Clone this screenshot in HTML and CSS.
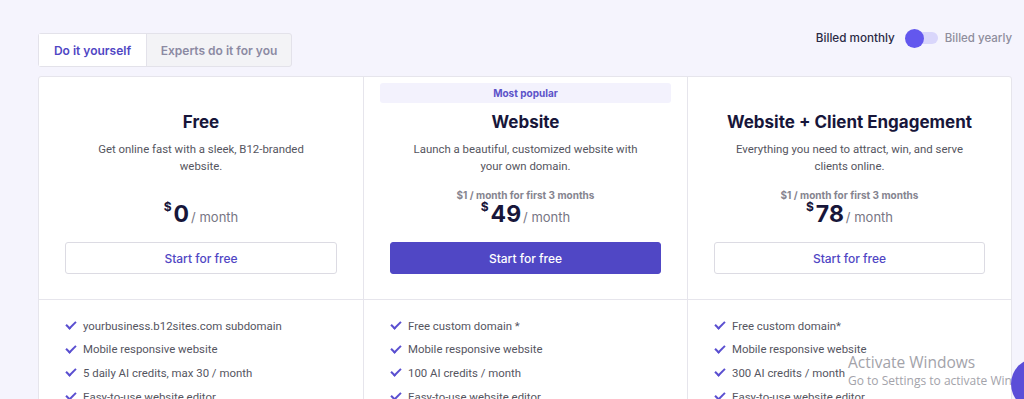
FILE: index.html
```html
<!DOCTYPE html>
<html lang="en">
<head>
    <meta charset="UTF-8">
    <meta name="viewport" content="width=device-width, initial-scale=1.0">
    <title>Pricing</title>
    <link rel="stylesheet" href="styles.css">
</head>
<body>
    <div class="page">
        <div class="topbar">
            <div class="tabs">
                <div class="tab active">Do it yourself</div>
                <div class="tab">Experts do it for you</div>
            </div>
            <div class="billing">
                <span class="bill-on">Billed monthly</span>
                <span class="switch"><span class="knob"></span></span>
                <span class="bill-off">Billed yearly</span>
            </div>
        </div>

        <div class="plans">
            <div class="plan">
                <div class="plan-head">
                    <div class="badge hidden">Most popular</div>
                    <h2>Free</h2>
                    <p class="desc">Get online fast with a sleek, B12-branded website.</p>
                    <p class="intro hidden">$1 / month for first 3 months</p>
                    <div class="price"><sup>$</sup><b>0</b><span>/ month</span></div>
                    <button class="btn">Start for free</button>
                </div>
                <ul class="features">
                    <li>yourbusiness.b12sites.com subdomain</li>
                    <li>Mobile responsive website</li>
                    <li>5 daily AI credits, max 30 / month</li>
                    <li>Easy-to-use website editor</li>
                </ul>
            </div>

            <div class="plan">
                <div class="plan-head">
                    <div class="badge">Most popular</div>
                    <h2>Website</h2>
                    <p class="desc">Launch a beautiful, customized website with your own domain.</p>
                    <p class="intro">$1 / month for first 3 months</p>
                    <div class="price"><sup>$</sup><b>49</b><span>/ month</span></div>
                    <button class="btn primary">Start for free</button>
                </div>
                <ul class="features">
                    <li>Free custom domain *</li>
                    <li>Mobile responsive website</li>
                    <li>100 AI credits / month</li>
                    <li>Easy-to-use website editor</li>
                </ul>
            </div>

            <div class="plan">
                <div class="plan-head">
                    <div class="badge hidden">Most popular</div>
                    <h2>Website + Client Engagement</h2>
                    <p class="desc">Everything you need to attract, win, and serve clients online.</p>
                    <p class="intro">$1 / month for first 3 months</p>
                    <div class="price"><sup>$</sup><b>78</b><span>/ month</span></div>
                    <button class="btn">Start for free</button>
                </div>
                <ul class="features">
                    <li>Free custom domain*</li>
                    <li>Mobile responsive website</li>
                    <li>300 AI credits / month</li>
                    <li>Easy-to-use website editor</li>
                </ul>
            </div>
        </div>
    </div>

    <div class="activate">
        <div class="act-title">Activate Windows</div>
        <div class="act-sub">Go to Settings to activate Windows.</div>
    </div>
    <div class="chat-bubble"></div>
</body>
</html>
```

FILE: styles.css
```css
body {
    margin: 0;
    background-color: #f5f4fd;
    font-family: 'Roboto', sans-serif;
    color: #555;
    overflow: hidden;
}

.page {
    padding: 33px 12px 0 38px;
}

.topbar {
    display: flex;
    justify-content: space-between;
    align-items: flex-start;
}

.tabs {
    display: flex;
    border: 1px solid #e3e2ea;
    border-radius: 3px;
    background-color: #f3f3f6;
    height: 32px;
}

.tab {
    font-family: 'Inter', sans-serif;
    font-size: 12px;
    font-weight: 600;
    color: #8c8aa3;
    display: flex;
    align-items: center;
    justify-content: center;
    width: 144px;
}

.tab.active {
    background-color: #ffffff;
    color: #5046c4;
    width: 107px;
    border-right: 1px solid #e3e2ea;
}

.billing {
    display: flex;
    align-items: center;
    gap: 5px;
    margin-top: -2px;
    font-family: 'Inter', sans-serif;
    font-size: 12px;
    font-weight: 500;
}

.bill-on {
    color: #2b2a45;
    margin-right: 6px;
    font-size: 11.7px;
}

.bill-off {
    color: #8e8d9c;
    font-size: 11.5px;
}

.switch {
    position: relative;
    width: 32px;
    height: 12px;
    border-radius: 6px;
    background-color: #d9d6fb;
    margin: 0 2px 0 0;
}

.knob {
    position: absolute;
    left: -1px;
    top: -3px;
    width: 19px;
    height: 19px;
    border-radius: 50%;
    background-color: #6357ee;
}

.plans {
    margin-top: 9px;
    display: grid;
    grid-template-columns: 1fr 1fr 1fr;
    background-color: #ffffff;
    border: 1px solid #e6e5ec;
    border-radius: 3px;
    height: 360px;
}

.plan + .plan {
    border-left: 1px solid #e6e5ec;
}

.plan-head {
    display: flex;
    flex-direction: column;
    align-items: center;
    padding: 6px 26px 25px;
    border-bottom: 1px solid #e6e5ec;
    text-align: center;
}

.badge {
    align-self: stretch;
    margin: 0 -10px;
    height: 20px;
    line-height: 20px;
    border-radius: 3px;
    background-color: #f3f2fd;
    color: #5c52c9;
    font-family: 'Inter', sans-serif;
    font-size: 10px;
    font-weight: 700;
}

.hidden {
    visibility: hidden;
}

h2 {
    margin: 8px 0 0;
    font-family: 'Inter', sans-serif;
    font-size: 17px;
    font-weight: 700;
    color: #17163a;
    line-height: 22px;
}

.desc {
    margin: 8px 0 0;
    max-width: 244px;
    font-size: 11.4px;
    line-height: 17px;
    color: #555560;
}

.intro {
    margin: 14px 0 0;
    font-family: 'Inter', sans-serif;
    font-size: 10px;
    font-weight: 700;
    color: #85848f;
    line-height: 12px;
}

.price {
    display: flex;
    align-items: baseline;
    color: #17163a;
    font-family: 'Inter', sans-serif;
    height: 26px;
}

.price sup {
    font-size: 12px;
    font-weight: 700;
    align-self: flex-start;
    line-height: 12px;
    margin-right: 2px;
}

.price b {
    font-size: 23px;
    line-height: 26px;
    font-weight: 700;
}

.price span {
    font-size: 13px;
    font-weight: 400;
    color: #777684;
    margin-left: 2px;
}

.btn {
    margin-top: 15px;
    align-self: stretch;
    height: 32px;
    border: 1px solid #dcdbe3;
    border-radius: 3px;
    background-color: #ffffff;
    color: #5046c4;
    font-family: 'Inter', sans-serif;
    font-size: 12px;
    font-weight: 500;
    cursor: pointer;
}

.btn.primary {
    background-color: #5047c5;
    border-color: #5047c5;
    color: #ffffff;
}

.features {
    list-style: none;
    margin: 0;
    padding: 14px 0 0 25px;
}

.features li {
    display: flex;
    align-items: center;
    gap: 5px;
    height: 23.6px;
    font-size: 11.4px;
    color: #55555f;
}

.features li::before {
    content: '';
    width: 8px;
    height: 4px;
    border-left: 2px solid #5a4fd0;
    border-bottom: 2px solid #5a4fd0;
    transform: rotate(-45deg);
    margin: -3px 2px 0 2px;
}

.activate {
    position: absolute;
    left: 848px;
    top: 352px;
    color: #a3a3aa;
    font-family: 'Open Sans', sans-serif;
    white-space: nowrap;
}

.act-title {
    font-size: 15.5px;
    line-height: 20px;
}

.act-sub {
    font-size: 12px;
    line-height: 18px;
}

.chat-bubble {
    position: absolute;
    left: 1011px;
    top: 358px;
    width: 52px;
    height: 52px;
    border-radius: 50%;
    background-color: #5b4ed8;
}
```
